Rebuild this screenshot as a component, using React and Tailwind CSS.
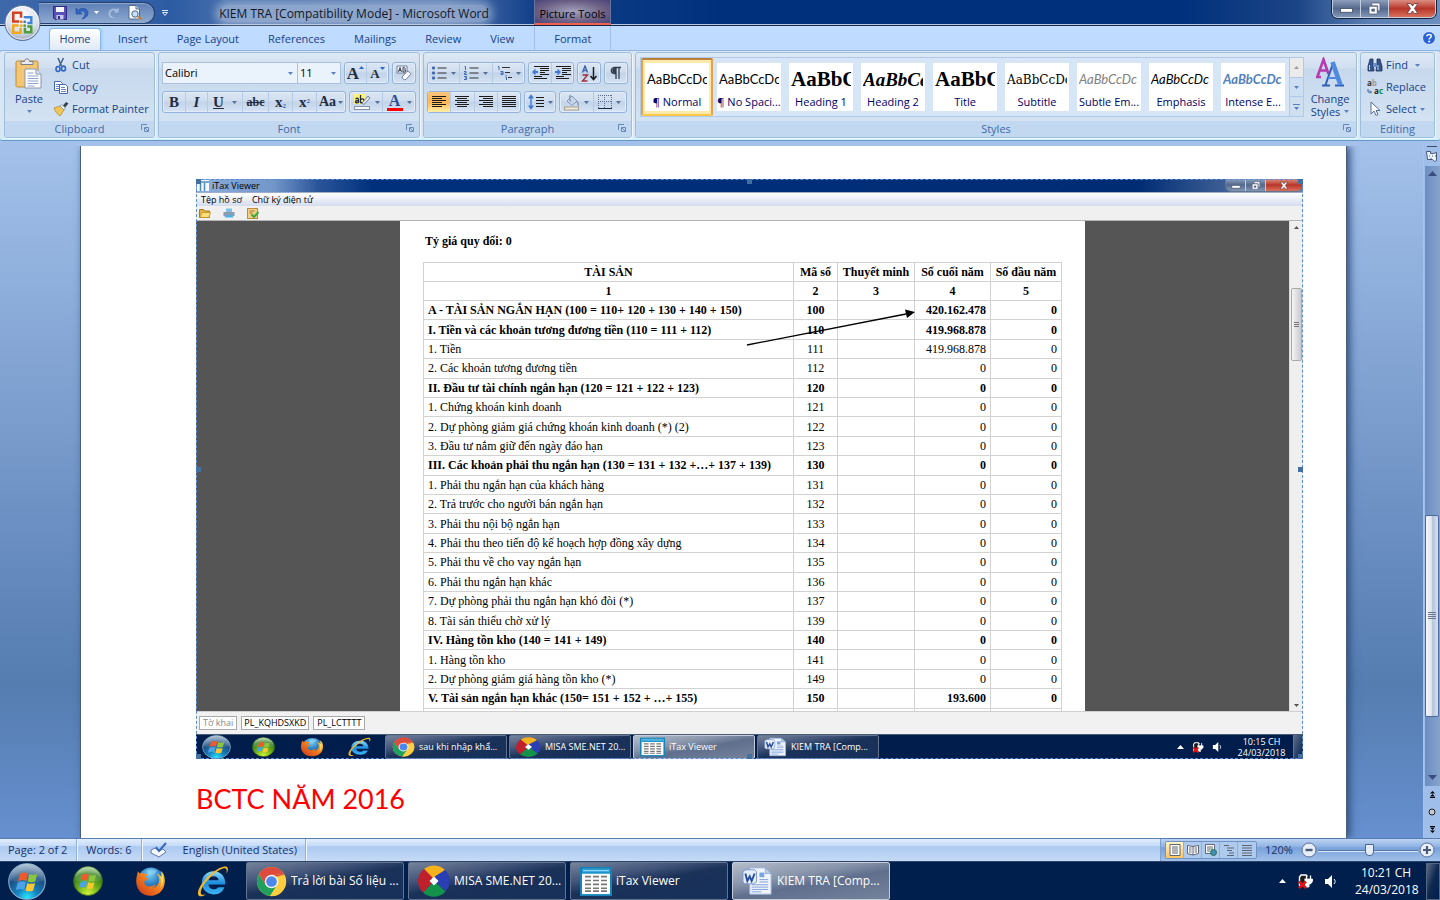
import clsx from "clsx";

const UI = "font-['Open_Sans',sans-serif]";

const TABS = ["Insert", "Page Layout", "References", "Mailings", "Review", "View"];

const STYLES = [
  { name: "¶ Normal", sample: "AaBbCcDc", cls: "font-['Lato',sans-serif] text-[13px] text-black", active: true },
  { name: "¶ No Spaci...", sample: "AaBbCcDc", cls: "font-['Lato',sans-serif] text-[13px] text-black" },
  { name: "Heading 1", sample: "AaBbCc", cls: "font-['Liberation_Serif',serif] text-[21px] font-bold text-black" },
  { name: "Heading 2", sample: "AaBbCc", cls: "font-['Liberation_Serif',serif] text-[19px] font-bold italic text-black" },
  { name: "Title", sample: "AaBbCc", cls: "font-['Liberation_Serif',serif] text-[21px] font-semibold text-black" },
  { name: "Subtitle", sample: "AaBbCcDc", cls: "font-['DejaVu_Serif',serif] text-[12px] text-black" },
  { name: "Subtle Em...", sample: "AaBbCcDc", cls: "font-['Lato',sans-serif] text-[13px] italic text-[#808080]" },
  { name: "Emphasis", sample: "AaBbCcDc", cls: "font-['Lato',sans-serif] text-[13px] italic text-black" },
  { name: "Intense E...", sample: "AaBbCcDc", cls: "font-['Lato',sans-serif] text-[13px] font-bold italic text-[#4f81bd]" },
];

const ROWS = [
  ["A - TÀI SẢN NGẮN HẠN (100 = 110+ 120 + 130 + 140 + 150)", "100", "420.162.478", true],
  ["I. Tiền và các khoản tương đương tiền (110 = 111 + 112)", "110", "419.968.878", true],
  ["1. Tiền", "111", "419.968.878"],
  ["2. Các khoản tương đương tiền", "112", "0"],
  ["II. Đầu tư tài chính ngắn hạn (120 = 121 + 122 + 123)", "120", "0", true],
  ["1. Chứng khoán kinh doanh", "121", "0"],
  ["2. Dự phòng giảm giá chứng khoán kinh doanh (*) (2)", "122", "0"],
  ["3. Đầu tư nắm giữ đến ngày đáo hạn", "123", "0"],
  ["III. Các khoản phải thu ngắn hạn (130 = 131 + 132 +…+ 137 + 139)", "130", "0", true],
  ["1. Phải thu ngắn hạn của khách hàng", "131", "0"],
  ["2. Trả trước cho người bán ngắn hạn", "132", "0"],
  ["3. Phải thu nội bộ ngắn hạn", "133", "0"],
  ["4. Phải thu theo tiến độ kế hoạch hợp đồng xây dựng", "134", "0"],
  ["5. Phải thu về cho vay ngắn hạn", "135", "0"],
  ["6. Phải thu ngắn hạn khác", "136", "0"],
  ["7. Dự phòng phải thu ngắn hạn khó đòi (*)", "137", "0"],
  ["8. Tài sản thiếu chờ xử lý", "139", "0"],
  ["IV. Hàng tồn kho (140 = 141 + 149)", "140", "0", true],
  ["1. Hàng tồn kho", "141", "0"],
  ["2. Dự phòng giảm giá hàng tồn kho (*)", "149", "0"],
  ["V. Tài sản ngắn hạn khác (150= 151 + 152 + …+ 155)", "150", "193.600", true],
];

/* ---------- shared paint ---------- */

function Gradients() {
  return (
    <svg width="0" height="0" className="absolute" aria-hidden="true">
      <defs>
        <radialGradient id="orbBlue" cx="50%" cy="95%" r="95%">
          <stop offset="0" stopColor="#29e6ff" />
          <stop offset=".3" stopColor="#1583c0" />
          <stop offset=".65" stopColor="#1c4f83" />
          <stop offset="1" stopColor="#7f9db8" />
        </radialGradient>
        <radialGradient id="orbGreen" cx="50%" cy="95%" r="95%">
          <stop offset="0" stopColor="#d4f53a" />
          <stop offset=".4" stopColor="#6fb01a" />
          <stop offset=".75" stopColor="#2f7a1b" />
          <stop offset="1" stopColor="#a3cf8a" />
        </radialGradient>
        <linearGradient id="gloss" x1="0" y1="0" x2="0" y2="1">
          <stop offset="0" stopColor="#fff" stopOpacity=".75" />
          <stop offset="1" stopColor="#fff" stopOpacity=".12" />
        </linearGradient>
        <radialGradient id="foxGlobe" cx="45%" cy="25%" r="80%">
          <stop offset="0" stopColor="#7fd3f4" />
          <stop offset=".5" stopColor="#2b7fc4" />
          <stop offset="1" stopColor="#123a7c" />
        </radialGradient>
        <linearGradient id="foxBody" x1="1" y1="0" x2="0" y2="1">
          <stop offset="0" stopColor="#ffd93b" />
          <stop offset=".45" stopColor="#f58220" />
          <stop offset="1" stopColor="#c8321b" />
        </linearGradient>
        <linearGradient id="ieBlue" x1="0" y1="0" x2="0" y2="1">
          <stop offset="0" stopColor="#8fdcfb" />
          <stop offset=".5" stopColor="#1d8fe0" />
          <stop offset="1" stopColor="#3fb4f2" />
        </linearGradient>
        <radialGradient id="officeOrb" cx="50%" cy="30%" r="75%">
          <stop offset="0" stopColor="#fff" />
          <stop offset=".6" stopColor="#d9e1ec" />
          <stop offset="1" stopColor="#8d9bb3" />
        </radialGradient>
      </defs>
    </svg>
  );
}

function WinFlag() {
  return (
    <g>
      <path d="M11 10c3-2 5-1.800 7.500-.6L17 16.500c-2.500-1.200-5-1.200-7.600.3z" fill="#f0592a" />
      <path d="M19.700 10c2.300 1 4.800 1 7.300-.2l-1.600 7c-2.400 1.300-4.800 1.200-7.100.2z" fill="#8cc63f" />
      <path d="M9 18.200c2.700-1.500 5.100-1.500 7.600-.3L15 25c-2.500-1.200-5-1.100-7.700.4z" fill="#4aa3e8" />
      <path d="M17.900 18.500c2.400 1.100 4.700 1.100 7.200-.1l-1.700 7.100c-2.500 1.200-4.800 1.100-7.100 0z" fill="#fdc82f" />
    </g>
  );
}

function StartOrb({ className, green }) {
  return (
    <svg viewBox="0 0 36 36" preserveAspectRatio="none" className={className}>
      <circle cx="18" cy="18" r="17.300" fill={green ? "url(#orbGreen)" : "url(#orbBlue)"} stroke={green ? "#3d6d1d" : "#8fb4cf"} strokeWidth="1" />
      <path d="M2 17A16 16 0 0 1 34 17Q18 22 2 17z" fill="url(#gloss)" opacity=".55" />
      <g transform="translate(-.2 .4) scale(1.03)">
        <WinFlag />
      </g>
    </svg>
  );
}

function FirefoxIcon({ className }) {
  return (
    <svg viewBox="0 0 32 32" preserveAspectRatio="none" className={className}>
      <circle cx="16.500" cy="15" r="13.500" fill="url(#foxGlobe)" />
      <path d="M12 5c3-2 8-2 11 0l-3 3-5 1z" fill="#9fe0f7" opacity=".5" />
      <path
        d="M29.500 8.500C32 15 31 23 25.500 27.500 19 32.500 9 31.500 4.500 25.500 1 21 .5 14.500 2.200 9L3 5.500l2 2.300c1.700-.8 3.400-.7 4.800.2 1.300.3 2.500.2 3.700 0-.6 1.700-2 2.300-3.300 3.200.2 1.200 2.300 1 3.300 1.400-.4 2-2.500 2-3.800 3.200-.7 2.200 1 4.300 3.300 5 3 .9 6-.8 8.700-2.300-.8 2-2 3.400-4 4.200 4-.4 7-3.700 7.300-7.700.1-2.500-.5-5-2.500-7.500 2.400.9 3.800 2.300 4.600 4 .5-1.500.6-4-.8-6.500 1.300 1 2.500 2.300 3.200 3.500z"
        fill="url(#foxBody)"
      />
      <path d="M27 6c2.600 5 3 12-1 17 2-6 1.500-10-.5-13 1 .3 1.700 1 2.300 1.800.2-2-.1-4-.8-5.800z" fill="#ffe66b" />
    </svg>
  );
}

function IEIcon({ className }) {
  return (
    <svg viewBox="0 0 32 32" preserveAspectRatio="none" className={className}>
      <path
        d="M16.500 6C10 6 5.500 11 5.500 17.300S10.300 28.500 16.800 28.500c4.700 0 8.600-2.600 10-7h-6c-.8 1.400-2.200 2-3.900 2-3 0-5-1.900-5.100-4.700H27.500C28 11.500 23.500 6 16.500 6zm-4.600 8.700c.4-2.400 2.200-3.900 4.700-3.900s4.400 1.500 4.700 3.900z"
        fill="url(#ieBlue)"
      />
      <path
        d="M28.800 8.500c1.600-3.600 1.700-6 .1-6.800-2.300-1.200-8 1.200-13 5.300C7 14 .8 23.700 2 28.500c.7 2.600 4 2.200 8-.2-2.700.9-4.700 1-5.300-.5C3.400 24.400 8.500 16 15.700 9.700 21 5 26.300 2.300 28 3.500c1 .7 1 2.500.8 5z"
        fill="#f3b92d"
      />
    </svg>
  );
}

function ChromeIcon({ className }) {
  return (
    <svg viewBox="0 0 32 32" preserveAspectRatio="none" className={className}>
      <circle cx="16" cy="16" r="15" fill="#ffcd40" />
      <path d="M3 8.500A15 15 0 0 1 29.300 9H16l-6.500 10.500z" fill="#dd4b3e" />
      <path d="M3 8.500A15 15 0 0 0 14.500 30.900L21.700 19.500 16 22.500 9.800 19.500z" fill="#1fa05c" />
      <path d="M29.300 9A15 15 0 0 1 14.500 31L22.300 19.500 21 10z" fill="#ffcd40" />
      <path d="M29.300 9H16v3z" fill="#dd4b3e" />
      <circle cx="16" cy="16" r="7" fill="#f4f4f4" />
      <circle cx="16" cy="16" r="5.500" fill="#4a88ee" />
    </svg>
  );
}

// Four pinwheel quarters round a white diamond.
function MisaIcon({ className }) {
  return (
    <svg viewBox="0 0 32 32" preserveAspectRatio="none" className={className}>
      <path d="M6 4A15.500 15.500 0 0 1 27 5L20 12 15 15z" fill="#f4b21d" />
      <path d="M27 5A15.500 15.500 0 0 1 27.500 26.500L20 19 16 16 16 12z" fill="#2a3fb4" />
      <path d="M27.500 26.500A15.500 15.500 0 0 1 5 27.500L12 20 16 16z" fill="#12924a" />
      <path d="M5 27.500A15.500 15.500 0 0 1 6 4L17 15z" fill="#c01f2c" />
      <path d="M16 11.500 20.500 16 16 20.500 11.500 16z" fill="#fff" />
    </svg>
  );
}

function SheetIcon({ className }) {
  return (
    <svg viewBox="0 0 32 32" preserveAspectRatio="none" className={className}>
      <rect x="1" y="2" width="30" height="28" fill="#fff" stroke="#1583b8" strokeWidth="2" />
      <rect x="2" y="3" width="28" height="5" fill="#1e94cf" />
      <rect x="3" y="4" width="26" height="1.500" fill="#8fd4f2" />
      {[11, 15, 19, 23, 26].map((y) => (
        <path key={y} d={`M5 ${y}h6M13 ${y}h6M21 ${y}h6`} stroke="#777" strokeWidth="1.700" />
      ))}
    </svg>
  );
}

function WordIcon({ className }) {
  return (
    <svg viewBox="0 0 32 32" preserveAspectRatio="none" className={className}>
      <path d="M8 2h16l6 6v22H8z" fill="#f0f5fc" stroke="#9cb6dd" />
      <path d="M24 2v6h6z" fill="#bcd0ee" stroke="#86a4d2" strokeWidth=".8" />
      <rect x="18" y="7" width="5" height="5" fill="#7ba3dd" />
      <path d="M10 20h17M10 22.500h17M10 25h17M10 27.500h10M18 14.500h9M18 17h9" stroke="#7d9fd6" strokeWidth="1" />
      <path d="M1 6l3-2h9l2 2v11l-3 2H3l-2-2z" fill="#e6eefb" stroke="#7896cf" />
      <path d="M3.500 8l2 8 2.500-5 2 5 3-8" fill="none" stroke="#2b4fa0" strokeWidth="2" />
    </svg>
  );
}

function Caret({ className }) {
  return (
    <svg width="5" height="3" viewBox="0 0 5 3" className={clsx("shrink-0", className)}>
      <path d="M0 0h5L2.500 3z" fill="currentColor" />
    </svg>
  );
}

/* ---------- title bar ---------- */

function OfficeButton() {
  return (
    <button type="button" aria-label="Office" className="absolute left-1 top-1 z-10">
      <svg width="37" height="38" viewBox="0 0 38 38">
        <circle cx="19" cy="19" r="18" fill="url(#officeOrb)" stroke="#5b7196" />
        <circle cx="19" cy="19" r="16.800" fill="none" stroke="#fff" strokeOpacity=".7" />
        <g fill="none" strokeWidth="2.600">
          <path d="M15.500 17.500H9.500V8.500h8v5" stroke="#d7401f" />
          <path d="M21.500 14v-1h6.500v6H24" stroke="#3f86d8" />
          <path d="M15 21.500H9.500V29h7.500v-5" stroke="#f2a81d" />
          <path d="M21.500 24v4.500h6.500v-6h-4" stroke="#4f9d3a" />
        </g>
        <path d="M16.500 16.500h2.500v2.500h-2.500z" fill="#e8771f" />
        <path d="M20 16.500h2.500v2.500H20z" fill="#3a78c8" />
        <path d="M16.500 20.500h2.500V23h-2.500z" fill="#f2a81d" />
        <path d="M20 20.500h2.500V23H20z" fill="#4f9d3a" />
      </svg>
    </button>
  );
}

function QuickAccess() {
  return (
    <div className="flex w-[170px] items-center pl-[39px]">
      <div className="flex h-[22px] w-[116px] items-center gap-2 rounded-r-full border border-l-0 border-[#24406f] bg-linear-to-b from-[#5f80b5] to-[#8eaad2] pl-[14px] shadow-[inset_0_1px_0_#8ba5cc]">
        <button type="button" aria-label="Save">
          <svg width="14" height="14" viewBox="0 0 14 14">
            <path d="M.5.5h13v13H2l-1.500-1.500z" fill="#5a50b8" stroke="#2d2a80" />
            <path d="M3 1h8v5H3z" fill="#f4f6fc" />
            <path d="M3.500 9h7v4.500h-7z" fill="#c6c8e8" />
            <path d="M5 10h2v3H5z" fill="#2d2a80" />
          </svg>
        </button>
        <button type="button" aria-label="Undo" className="flex items-center gap-[5px] text-white">
          <svg width="14" height="14" viewBox="0 0 14 14">
            <path d="M1 2v6h6L4.800 5.800C7 4 10.500 5 10 8.500c-.3 2-1.500 3.300-3 4.500 3.500-.7 6-3 6-6C13 2.500 7.500.8 3.200 4.200z" fill="#3266c4" stroke="#1f4695" strokeWidth=".6" />
          </svg>
          <Caret />
        </button>
        <button type="button" aria-label="Redo">
          <svg width="13" height="14" viewBox="0 0 13 14">
            <path d="M12 1v6H6l2-2C5 4 3.500 6 4 8.500c.5 2.500 4 3.500 7 2C8 14.500 1.500 13 1 8.500.7 4 5.500.8 10 3z" fill="#a5bcdf" stroke="#6f8dbd" strokeWidth=".6" />
          </svg>
        </button>
        <button type="button" aria-label="Print preview">
          <svg width="15" height="15" viewBox="0 0 15 15">
            <path d="M1 .5h7L11.500 4v10H1z" fill="#fff" stroke="#59698a" />
            <path d="M8 .5V4h3.500" fill="#cfd9ea" stroke="#59698a" />
            <circle cx="7" cy="9" r="3.200" fill="#c5e3f8" stroke="#47648f" />
            <path d="M9.500 11.500 14 14.500" stroke="#c4822c" strokeWidth="2" />
          </svg>
        </button>
      </div>
      <button type="button" aria-label="Customize Quick Access Toolbar" className="ml-[7px] text-white">
        <svg width="6" height="6" viewBox="0 0 6 6">
          <path d="M0 .5h6" stroke="#dfe9f8" />
          <path d="M.5 2.500h5L3 5.500z" fill="none" stroke="#dfe9f8" />
        </svg>
      </button>
    </div>
  );
}

function WindowButtons({ small }) {
  const cell = small ? "h-3 w-5" : "h-[17px] w-7";
  const glyph = small ? "h-[9px] w-[10px]" : "h-[13px] w-[13px]";
  return (
    <div
      className={clsx(
        "flex self-start overflow-hidden rounded-b-md border border-t-0",
        small ? "border-[#5f7592]" : "border-[#c3d0e2] shadow-[0_0_0_1px_#16233e]"
      )}
    >
      <button type="button" aria-label="Minimize" className={clsx(cell, "flex items-center justify-center border-r border-[#c3cfdf] bg-linear-to-b from-[#8d9fbb] via-[#54698e] to-[#8296b6]")}>
        <svg viewBox="0 0 12 12" className={glyph}>
          <rect x=".5" y="6" width="11" height="3.500" fill="#fff" stroke="#49536a" strokeWidth=".8" />
        </svg>
      </button>
      <button type="button" aria-label="Restore" className={clsx(cell, "flex items-center justify-center border-r border-[#c3cfdf] bg-linear-to-b from-[#8d9fbb] via-[#54698e] to-[#8296b6]")}>
        <svg viewBox="0 0 12 12" className={glyph}>
          <path d="M3.500 1h7.500v7H9V3.500H3.500z" fill="#fff" stroke="#49536a" strokeWidth=".6" />
          <path d="M1 4h7.500v7H1zM3.500 6.500v2H6v-2z" fill="#fff" fillRule="evenodd" stroke="#49536a" strokeWidth=".6" />
        </svg>
      </button>
      <button type="button" aria-label="Close" className={clsx(small ? "h-3 w-9" : "h-[17px] w-[46px]", "flex items-center justify-center bg-linear-to-b from-[#d98d80] via-[#b8352a] to-[#d9705a]")}>
        <svg viewBox="0 0 12 12" className={glyph}>
          <path d="M1 1.500h3.300L6 3.700l1.700-2.200H11L7.800 6 11 10.500H7.700L6 8.300 4.300 10.500H1L4.200 6z" fill="#fff" stroke="#5b3038" strokeWidth=".7" />
        </svg>
      </button>
    </div>
  );
}

function TitleBar() {
  return (
    <header className="flex h-[26px] border-b border-[#152848] bg-[linear-gradient(90deg,#3d69ab_0%,#2e5ca3_12%,#4d74ae_17%,#5478b0_31%,#12408a_37%,#00307c_50%,#00307c_82%,#1b4485_90%,#5a7fb2_95%,#6c8fc0_100%)] shadow-[inset_0_-1px_0_#b5c8e3]">
      <QuickAccess />
      <h1 className="w-[364px] self-center pl-1 pt-[2px] text-center text-[12px] leading-4 text-[#101828]">
        <span className="rounded-full bg-[#c9d6ea]/50 shadow-[0_0_8px_4px_rgb(201_214_234/0.5)]">
          KIEM TRA [Compatibility Mode] - Microsoft Word
        </span>
      </h1>
      <div className="flex w-[77px] items-center justify-center border-x border-b-2 border-x-[#6b7499] border-b-[#f0604c] bg-[radial-gradient(ellipse_at_center,#a2a3bd_0%,#6f6287_60%,#4a4379_100%)] pt-[6px] text-[11px] text-black">
        Picture Tools
      </div>
      <div className="flex flex-1 justify-end pr-1">
        <WindowButtons />
      </div>
    </header>
  );
}

function TabRow() {
  return (
    <nav className="flex h-6 items-end gap-px bg-[#bfdbff] pl-[49px] text-[11px] text-[#15428b]">
      <button type="button" className="mr-[2px] h-[22px] w-[52px] rounded-t border border-b-0 border-[#8db2e3] bg-linear-to-b from-white to-[#dfe9f5] shadow-[1px_0_3px_#7fd8ee]">
        Home
      </button>
      {TABS.map((t) => (
        <button key={t} type="button" className="h-[22px] px-[14px]">
          {t}
        </button>
      ))}
      <button type="button" className="ml-[5px] h-6 w-[77px] self-stretch border-x border-[#a3bfe6] pt-[2px]">
        Format
      </button>
      <button type="button" aria-label="Help" className="ml-auto mr-1 self-center">
        <svg width="14" height="14" viewBox="0 0 14 14">
          <circle cx="7" cy="7" r="6.500" fill="#2a63d6" stroke="#dce8f8" />
          <path d="M4.800 5.300C5 2.800 9.300 2.800 9.300 5.200 9.300 6.800 7.200 6.700 7.200 8.500" fill="none" stroke="#fff" strokeWidth="1.500" />
          <circle cx="7.200" cy="10.500" r="1" fill="#fff" />
        </svg>
      </button>
    </nav>
  );
}

/* ---------- ribbon ---------- */

function Group({ title, launcher, className, children }) {
  return (
    <section
      className={clsx(
        "flex h-[86px] flex-col overflow-hidden rounded-[3px] border border-[#9ebfdb] bg-[linear-gradient(180deg,#dee8f5_0%,#d1dff0_18%,#c7d8ed_19%,#d6e6f4_100%)] shadow-[1px_1px_0_#eef5fc]",
        className
      )}
    >
      <div className="min-h-0 flex-1">{children}</div>
      <div className="relative h-4 bg-[#c2d8f0] text-center text-[11px] leading-4 text-[#3e6aaa]">
        {title}
        {launcher && (
          <button type="button" aria-label={`${title} options`} className="absolute right-[5px] top-[3px]">
            <svg width="8" height="8" viewBox="0 0 8 8" fill="none" stroke="#6888b5">
              <path d="M.5 6V.5H6M3.500 3.500h4v4h-4z" />
              <path d="M4 4l3 3" />
            </svg>
          </button>
        )}
      </div>
    </section>
  );
}

function Cluster({ className, children }) {
  return (
    <div className={clsx("flex h-[22px] rounded-[3px] border border-[#94b4dc] bg-[linear-gradient(180deg,#dbe6f3_0%,#cfddee_45%,#c2d3e9_50%,#d5e3f3_100%)] text-[#54709c] shadow-[inset_0_0_0_1px_#e4edf7]", className)}>
      {children}
    </div>
  );
}

// `width` pins a tool; without it the tools of a cluster share the room evenly.
function Tool({ label, caret, width = "flex-1", className, children }) {
  return (
    <button type="button" aria-label={label} className={clsx("flex h-5 items-center justify-center gap-1 border-r border-[#b6cbe4] last:border-r-0", width, className)}>
      {children}
      {caret && <Caret />}
    </button>
  );
}

function ClipboardGroup() {
  return (
    <Group title="Clipboard" launcher className="w-[151px]">
      <div className="flex h-full pl-1 text-[11px] text-[#15428b]">
        <button type="button" className="flex w-10 flex-col items-center pt-[5px]">
          <svg width="30" height="32" viewBox="0 0 30 32">
            <rect x="2" y="3" width="22" height="26" rx="1.500" fill="#f2c673" stroke="#c08a35" />
            <path d="M7 3.500h3.500c0-3.500 5-3.500 5 0H19v3H7z" fill="#e7e9ee" stroke="#7b7f8a" />
            <path d="M11 11h11l5 5v14H11z" fill="#fff" stroke="#8796b4" />
            <path d="M22 11v5h5" fill="#dfe6f2" stroke="#8796b4" />
            <path d="M13.500 15h6M13.500 18h11M13.500 20.500h11M13.500 23h11M13.500 25.500h11M13.500 28h7" stroke="#8fa3cc" />
          </svg>
          <span className="pt-px leading-4">Paste</span>
          <Caret className="mt-[3px] text-[#5a80bd]" />
        </button>
        <div className="flex flex-col gap-[6px] pl-1 pt-1">
          <button type="button" className="flex h-4 items-center gap-[3px]">
            <svg width="16" height="16" viewBox="0 0 16 16">
              <path d="M5 1l3.500 8M10.500 1 6.500 9" stroke="#47618f" strokeWidth="1.600" />
              <ellipse cx="5" cy="12" rx="2" ry="2.500" fill="none" stroke="#2f66c4" strokeWidth="1.600" />
              <ellipse cx="10.500" cy="11.500" rx="2" ry="2.400" fill="none" stroke="#2f66c4" strokeWidth="1.600" />
            </svg>
            Cut
          </button>
          <button type="button" className="flex h-4 items-center gap-[3px]">
            <svg width="16" height="16" viewBox="0 0 16 16">
              <path d="M1.500 2.500h6l2 2v7h-8z" fill="#fff" stroke="#4568ad" />
              <path d="M3 5.500h4M3 7.500h5M3 9.500h3" stroke="#6288cc" />
              <path d="M6.500 5.500h6l2 2v7h-8z" fill="#fff" stroke="#4568ad" />
              <path d="M8 8.500h4M8 10.500h5M8 12.500h5" stroke="#6288cc" />
            </svg>
            Copy
          </button>
          <button type="button" className="flex h-4 items-center gap-[3px] whitespace-nowrap">
            <svg width="16" height="16" viewBox="0 0 16 16">
              <path d="M1 7l6-2 4 4-4 6C4 13 2 10 1 7z" fill="#f0c65a" stroke="#b98a2a" strokeWidth=".8" />
              <path d="M7 5l2-1.500 3.500 3.500L11 9z" fill="#e9edf5" stroke="#7d8aa8" strokeWidth=".7" />
              <path d="M10 4.500 13 1l2.500 1.500L12 6.500z" fill="#3a424f" />
            </svg>
            Format Painter
          </button>
        </div>
      </div>
    </Group>
  );
}

function Combo({ label, value, className }) {
  return (
    <div className={clsx("relative h-[22px] border border-[#abc1de] bg-[#eaf2fb]", className)}>
      <select aria-label={label} defaultValue={value} className="block h-5 w-full appearance-none bg-transparent pl-[2px] text-[11px] leading-5 text-black outline-none">
        <option>{value}</option>
      </select>
      <Caret className="pointer-events-none absolute right-1 top-[9px] text-[#5a80bd]" />
    </div>
  );
}

function FontGroup() {
  const serif = "font-['Liberation_Serif',serif] leading-none text-[#222c3e]";
  return (
    <Group title="Font" launcher className="w-[262px]">
      <div className="flex flex-col gap-[7px] px-[3px] pt-[9px]">
        <div className="flex">
          <Combo label="Font" value="Calibri" className="w-[136px]" />
          <Combo label="Font size" value="11" className="w-[43px] border-l-0" />
          <Cluster className="ml-[3px] w-[45px]">
            <Tool label="Grow Font" className={clsx(serif, "text-[17px] font-bold")}>
              <span className="flex items-start">A<svg width="5" height="5" viewBox="0 0 5 5"><path d="M0 4h5L2.500 1z" fill="#2f66c4" /></svg></span>
            </Tool>
            <Tool label="Shrink Font" className={clsx(serif, "text-[13px] font-bold")}>
              <span className="flex items-start">A<svg width="5" height="5" viewBox="0 0 5 5"><path d="M0 0h5L2.500 3z" fill="#2f66c4" /></svg></span>
            </Tool>
          </Cluster>
          <Cluster className="ml-[3px] w-6">
            <Tool label="Clear Formatting">
              <svg width="18" height="18" viewBox="0 0 18 18">
                <path d="M2 2h10v7H2z" fill="#f5f8fd" stroke="#55678d" strokeWidth=".8" />
                <path d="M3.500 8 5 3.500 6.500 8M4 6.500h2M8 3.500v4.500h1.500c1.500 0 1.500-2 0-2 1.300 0 1.300-2.500-1.500-2.500" fill="none" stroke="#222c3e" strokeWidth=".9" />
                <path d="M7 13l5-5.500c1-.8 4 1.500 3.500 3L11 15.500c-1.500 1-4-1-4-2.500z" fill="#fff" stroke="#6a7ba0" />
              </svg>
            </Tool>
          </Cluster>
        </div>
        <div className="flex gap-[3px]">
          <Cluster className="w-[184px]">
            <Tool label="Bold" width="w-[23px]" className={clsx(serif, "text-[15px] font-bold")}>B</Tool>
            <Tool label="Italic" width="w-[22px]" className={clsx(serif, "text-[15px] font-bold italic")}>I</Tool>
            <Tool label="Underline" caret width="w-[35px]">
              <span className={clsx(serif, "mr-1 text-[15px] font-bold underline")}>U</span>
            </Tool>
            <Tool label="Strikethrough" width="w-[26px]" className={clsx(serif, "text-[12px] font-bold line-through")}>abc</Tool>
            <Tool label="Subscript" width="w-6" className={clsx(serif, "text-[15px] font-bold")}>
              <span>x<sub className="text-[7px] text-[#2f66c4]">2</sub></span>
            </Tool>
            <Tool label="Superscript" width="w-6" className={clsx(serif, "text-[15px] font-bold")}>
              <span>x<sup className="text-[7px] text-[#2f66c4]">2</sup></span>
            </Tool>
            <button type="button" aria-label="Change Case" className="flex w-7 shrink-0 items-center justify-center gap-[2px]">
              <span className={clsx(serif, "text-[14px] font-bold")}>Aa</span>
              <Caret />
            </button>
          </Cluster>
          <Cluster className="w-[67px]">
            <Tool label="Highlight" caret>
              <svg width="18" height="18" viewBox="0 0 18 18">
                <rect x="1" y="1" width="11" height="10" fill="#fff27a" />
                <path d="M2.500 6c2-1.500 3-.5 3 1v2.500c-1 .5-3.500.5-3-1 .2-1 2-1 3-1M7.500 2v7.500c3 .8 4-.5 3.500-2.500-.5-1.500-2.500-1.500-3.500 0" fill="none" stroke="#222c3e" strokeWidth="1.300" />
                <path d="M9 10 15 3l2 2-6 6.500z" fill="#dfe6f2" stroke="#55678d" strokeWidth=".8" />
                <rect x="1.500" y="13.500" width="15" height="3" fill="#f5f8fd" stroke="#8793a8" />
              </svg>
            </Tool>
            <Tool label="Font Color" caret>
              <span className="flex h-[17px] w-4 items-start justify-center border-b-[3px] border-[#ff0000] font-['Liberation_Serif',serif] text-[16px] font-bold leading-[14px] text-[#2c4c94]">
                A
              </span>
            </Tool>
          </Cluster>
        </div>
      </div>
    </Group>
  );
}

function Lines({ rows }) {
  return (
    <svg width="16" height="14" viewBox="0 0 16 14" stroke="#1b1b1b">
      {rows.map(([x1, x2], i) => (
        <path key={i} d={`M${x1} ${i * 2 + 1.5}H${x2}`} />
      ))}
    </svg>
  );
}

const LEFT = [[1, 15], [1, 11], [1, 15], [1, 11], [1, 15], [1, 11]];
const CENTER = [[1, 15], [3, 13], [1, 15], [3, 13], [1, 15], [3, 13]];
const RIGHT = [[1, 15], [5, 15], [1, 15], [5, 15], [1, 15], [5, 15]];
const FULL = [[1, 15], [1, 15], [1, 15], [1, 15], [1, 15], [1, 15]];

function ListIcon({ kind }) {
  return (
    <svg width="15" height="16" viewBox="0 0 15 16">
      {kind === "multi" ? (
        <path d="M5 2.500h8M8 7.500h5M11 12.500h4" stroke="#333" />
      ) : (
        <path d="M5.500 3h9M5.500 8h9M5.500 13h9" stroke="#333" />
      )}
      {kind === "bullet" && (
        <g fill="#3e68b4">
          <rect x="0" y="1.500" width="3" height="3" rx="1" />
          <rect x="0" y="6.500" width="3" height="3" rx="1" />
          <rect x="0" y="11.500" width="3" height="3" rx="1" />
        </g>
      )}
      {kind === "number" && (
        <path d="M.5 1.500h1V5M0 6.500h2v1.500H.5v1.500H3M0 11.500h2.500v3H0M.8 13h1.700" fill="none" stroke="#3e68b4" />
      )}
      {kind === "multi" && (
        <path d="M1 1.500h1V5M3.500 6.500H6v3H4V8h2M8.500 12h1v3M9 10v1" fill="none" stroke="#3e68b4" />
      )}
    </svg>
  );
}

function IndentIcon({ right }) {
  return (
    <svg width="17" height="16" viewBox="0 0 17 16">
      <path d="M2 1.500h15M8 3.500h9M8 5.500h9M8 7.500h5M8 9.500h9M2 11.500h8M2 13.500h13" stroke="#1b1b1b" />
      <path d={right ? "M7 7 3.500 3.500V6H1v2h2.500v2.500z" : "M0 7 3.500 3.500V6H6v2H3.500v2.500z"} fill="#3e78d8" />
    </svg>
  );
}

function ParagraphGroup() {
  return (
    <Group title="Paragraph" launcher className="w-[209px]">
      <div className="flex flex-col gap-[7px] px-[3px] pt-[9px]">
        <div className="flex gap-[3px]">
          <Cluster className="w-[99px]">
            <Tool label="Bullets" caret><ListIcon kind="bullet" /></Tool>
            <Tool label="Numbering" caret><ListIcon kind="number" /></Tool>
            <Tool label="Multilevel List" caret><ListIcon kind="multi" /></Tool>
          </Cluster>
          <Cluster className="w-[46px]">
            <Tool label="Decrease Indent"><IndentIcon /></Tool>
            <Tool label="Increase Indent"><IndentIcon right /></Tool>
          </Cluster>
          <Cluster className="w-6">
            <Tool label="Sort">
              <svg width="17" height="17" viewBox="0 0 17 17">
                <path d="M1.500 7.500 4 1l2.500 6.500M2.200 5.500h3.600" fill="none" stroke="#3a64b0" strokeWidth="1.400" />
                <path d="M1.500 10h5l-5 6h5" fill="none" stroke="#a02c3c" strokeWidth="1.400" />
                <path d="M12.500 2v12M9.500 11l3 3.500 3-3.500" fill="none" stroke="#1b1b1b" strokeWidth="1.500" />
              </svg>
            </Tool>
          </Cluster>
          <Cluster className="w-6">
            <Tool label="Show paragraph marks">
              <svg width="12" height="14" viewBox="0 0 12 14">
                <path d="M11 1.500H5C0 1.500 0 7.500 5 7.500V2M6 1.500V13M9 1.500V13" fill="none" stroke="#333c4d" strokeWidth="1.300" />
                <path d="M5.500 2C1 2 1 7 5.500 7z" fill="#333c4d" />
              </svg>
            </Tool>
          </Cluster>
        </div>
        <div className="flex gap-[3px]">
          <Cluster className="w-[94px]">
            <Tool label="Align Left" className="bg-linear-to-b from-[#fbc57c] via-[#fdb456] to-[#fff0a4]"><Lines rows={LEFT} /></Tool>
            <Tool label="Center"><Lines rows={CENTER} /></Tool>
            <Tool label="Align Right"><Lines rows={RIGHT} /></Tool>
            <Tool label="Justify"><Lines rows={FULL} /></Tool>
          </Cluster>
          <Cluster className="w-8">
            <Tool label="Line Spacing" caret>
              <svg width="16" height="16" viewBox="0 0 16 16">
                <path d="M3 2v12M.8 4.500 3 1.500l2.200 3M.8 11.500 3 14.500l2.200-3" fill="none" stroke="#3e78d8" strokeWidth="1.400" />
                <path d="M8 3.500h8M8 6.500h8M8 9.500h8M8 12.500h8" stroke="#1b1b1b" />
              </svg>
            </Tool>
          </Cluster>
          <Cluster className="w-[68px]">
            <Tool label="Shading" caret>
              <svg width="17" height="17" viewBox="0 0 17 17">
                <path d="M4 7l5-5 5 5-5 4.500z" fill="#c9d6e8" stroke="#8397b8" />
                <path d="M8 1.500c-2 0-2 4 0 6M13.500 7c1.500 1 2 3 1.500 5" fill="none" stroke="#8397b8" strokeWidth="1.300" />
                <rect x="1.500" y="13" width="14" height="3" fill="#f1ece0" stroke="#a39c8c" />
              </svg>
            </Tool>
            <Tool label="Borders" caret>
              <svg width="14" height="14" viewBox="0 0 14 14" fill="none" stroke="#5a6a88">
                <path d="M0 .5h14M0 6.500h14M.5 0v14M6.500 0v14M13.500 0v14" strokeDasharray="1 1" />
                <path d="M0 13.500h14" stroke="#1b2a48" />
              </svg>
            </Tool>
          </Cluster>
        </div>
      </div>
    </Group>
  );
}

function StylesGroup() {
  return (
    <Group title="Styles" launcher className="min-w-0 flex-1">
      <div className="flex h-full pl-1 pt-1">
        <div className="flex h-[60px] min-w-0 flex-1 border border-[#b0c9e8] bg-[#d6e6f7]">
          {STYLES.map((s) => (
            <button
              key={s.name}
              type="button"
              className={clsx(
                "flex h-[58px] w-[72px] shrink-0 rounded-[2px]",
                s.active
                  ? "border-2 border-b-[#fbc94a] border-l-[#e8a04c] border-r-[#e8a04c] border-t-[#b9803c] bg-[#fde9a8] px-[2px] py-[3px]"
                  : "px-1 py-[5px]"
              )}
            >
              <span className="flex h-full w-full flex-col items-center overflow-hidden bg-white px-[2px] pt-[3px]">
                <span className={clsx("flex h-7 w-[60px] items-center overflow-hidden whitespace-nowrap", s.cls)}>
                  {s.sample}
                </span>
                <span className="whitespace-nowrap text-[11px] leading-4 text-[#00006b]">{s.name}</span>
              </span>
            </button>
          ))}
          <div className="ml-auto flex w-[14px] flex-col border-l border-[#b0c9e8] text-[#5a80bd]">
            <button type="button" aria-label="Scroll up" className="flex flex-1 items-center justify-center bg-[#ebebeb] text-[#9b9b9b]">
              <Caret className="rotate-180" />
            </button>
            <button type="button" aria-label="Scroll down" className="flex flex-1 items-center justify-center border-y border-[#b0c9e8] bg-[#cfdff2]">
              <Caret />
            </button>
            <button type="button" aria-label="More styles" className="flex flex-1 flex-col items-center justify-center gap-[2px] bg-[#cfdff2]">
              <span className="h-px w-[7px] bg-[#5a80bd]" />
              <Caret />
            </button>
          </div>
        </div>
        <button type="button" className="flex w-[52px] flex-col items-center text-[11px] leading-[13px] text-[#15428b]">
          <svg width="30" height="31" viewBox="0 0 30 31" className="mb-1">
            <path d="M1 20h5M2.500 19.500 8.500 2.500 13.500 17M5 13.500h7" fill="none" stroke="#b43cb0" strokeWidth="2.600" />
            <path d="M7 28.500h8M20 28.500h9" stroke="#2d60b8" strokeWidth="2" />
            <path d="M10.500 28 18 6.500" stroke="#2d60b8" strokeWidth="2" />
            <path d="M17.500 5 25.500 28" stroke="#4f8ae0" strokeWidth="4.600" />
            <path d="M13 21h9" stroke="#4f8ae0" strokeWidth="2.200" />
          </svg>
          <span>Change</span>
          <span className="flex items-center gap-1">Styles <Caret className="text-[#5a80bd]" /></span>
        </button>
      </div>
    </Group>
  );
}

function EditingGroup() {
  return (
    <Group title="Editing" className="w-[75px]">
      <div className="flex flex-col gap-[6px] pl-[6px] pt-1 text-[11px] text-[#15428b]">
        <button type="button" className="flex h-4 items-center gap-[3px]">
          <svg width="16" height="16" viewBox="0 0 16 16">
            <path d="M2 6l1-4h3v4l1 8H1V9zM14 6l-1-4h-3v4l-1 8h6V9z" fill="#35558f" stroke="#1c325f" strokeWidth=".8" />
            <path d="M6 6h4v4H6z" fill="#6b8dc7" />
            <path d="M2.500 8v5M11 8v5" stroke="#c3d6f2" />
          </svg>
          Find <Caret className="ml-1 text-[#5a80bd]" />
        </button>
        <button type="button" className="flex h-4 items-center gap-[3px]">
          <span className="flex w-4 flex-col text-[8px] font-bold leading-[8px]">
            <span className="text-left text-[#333]">a<span className="text-[#999]">b</span></span>
            <span className="flex items-center justify-between text-[#222]">
              <svg width="5" height="5" viewBox="0 0 5 5">
                <path d="M1 0v3h3M3 1.500 4.500 3 3 4.500" fill="none" stroke="#3a5c98" />
              </svg>
              <span>a<span className="text-[#1f8a2f]">c</span></span>
            </span>
          </span>
          Replace
        </button>
        <button type="button" className="flex h-4 items-center gap-[3px]">
          <svg width="16" height="16" viewBox="0 0 16 16">
            <path d="M4 1v12l3-3 2 4.500 2-1L9 9.500h4z" fill="#fff" stroke="#5e6f94" />
          </svg>
          Select <Caret className="ml-px text-[#5a80bd]" />
        </button>
      </div>
    </Group>
  );
}

function Ribbon() {
  return (
    <div className="bg-[#a3c1ea] pb-[5px]">
      <div className="flex gap-[3px] rounded-[3px] border-b border-t border-b-[#6f93c4] border-t-[#8db2e3] bg-[#dbe6f4] py-px pb-[2px] pl-1 pr-[5px] shadow-[inset_0_-2px_1px_#c9f4fb]">
        <ClipboardGroup />
        <FontGroup />
        <ParagraphGroup />
        <StylesGroup />
        <EditingGroup />
      </div>
    </div>
  );
}

/* ---------- pasted iTax Viewer picture ---------- */

function BalanceTable() {
  const cell = "border border-[#d2d2d2] px-1 py-0";
  return (
    <table className="h-[466px] w-full table-fixed border-collapse text-[12px] leading-[14px]">
      <colgroup>
        <col />
        <col className="w-[44px]" />
        <col className="w-[77px]" />
        <col className="w-[76px]" />
        <col className="w-[71px]" />
      </colgroup>
      <thead>
        <tr className="h-[19px] whitespace-nowrap">
          <th className={cell}>TÀI SẢN</th>
          <th className={cell}>Mã số</th>
          <th className={cell}>Thuyết minh</th>
          <th className={cell}>Số cuối năm</th>
          <th className="border border-[#d2d2d2] p-0">Số đầu năm</th>
        </tr>
        <tr className="h-[19px]">
          {[1, 2, 3, 4, 5].map((n) => (
            <th key={n} className={cell}>{n}</th>
          ))}
        </tr>
      </thead>
      <tbody>
        {ROWS.map(([name, code, end, bold]) => (
          <tr key={code} className={clsx("whitespace-nowrap", bold && "font-bold")}>
            <td className={cell}>{name}</td>
            <td className={clsx(cell, "text-center")}>{code}</td>
            <td className={cell} />
            <td className={clsx(cell, "text-right")}>{end}</td>
            <td className={clsx(cell, "text-right")}>0</td>
          </tr>
        ))}
        <tr>
          <td className={cell}>&nbsp;</td>
          <td className={cell} />
          <td className={cell} />
          <td className={cell} />
          <td className={cell} />
        </tr>
      </tbody>
    </table>
  );
}

function Handle({ className }) {
  return <span className={clsx("absolute h-[5px] w-[5px] bg-[#44709f]", className)} />;
}

function ITaxPicture() {
  return (
    <div className="relative flex h-[580px] flex-col overflow-hidden bg-[#f0f0f0] text-[#222]">
      <div className="flex h-[14px] shrink-0 items-center border-b border-[#9eaecb] bg-[linear-gradient(90deg,#8caedb_0%,#7396c9_7%,#2b559a_11%,#00307c_16%,#002c74_85%,#3e5f95_93%,#6b86b2_100%)] pl-px">
        <svg width="12" height="11" viewBox="0 0 12 11">
          <rect width="12" height="11" fill="#f4f8fc" />
          <path d="M0 2h12M3.500 3v8M7.500 3v8" stroke="#4c8cc0" strokeWidth="1.500" />
        </svg>
        <span className="ml-[3px] text-[9px] leading-3 text-black">iTax Viewer</span>
        <div className="ml-auto flex self-start">
          <WindowButtons small />
        </div>
      </div>
      <div className="flex h-[13px] shrink-0 items-center gap-[10px] bg-linear-to-b from-white to-[#d5dcee] pl-[5px] text-[9px] leading-3 text-black">
        <button type="button">Tệp hồ sơ</button>
        <button type="button">Chữ ký điện tử</button>
      </div>
      <div className="flex h-[15px] shrink-0 items-center gap-3 border-b border-[#b4b4b4] pl-[3px]">
        <button type="button" aria-label="Open">
          <svg width="12" height="10" viewBox="0 0 12 10">
            <path d="M.5 9.500v-8h4l1 1.500h5v6.500z" fill="#e7b53b" stroke="#a87a1c" />
            <path d="M1 9.500 3 4.500h8.500l-1.500 5z" fill="#ffe07a" stroke="#b98a22" strokeWidth=".7" />
          </svg>
        </button>
        <button type="button" aria-label="Print">
          <svg width="12" height="10" viewBox="0 0 12 10">
            <path d="M3 .5h6v4H3z" fill="#7fc1ea" />
            <path d="M.5 4h11v4H.5z" fill="#8d9bb0" />
            <path d="M2.500 7h7l1 2.500h-9z" fill="#4fb0e8" />
          </svg>
        </button>
        <button type="button" aria-label="Check signature">
          <svg width="12" height="11" viewBox="0 0 12 11">
            <rect x=".5" y=".5" width="10" height="10" fill="#f3cf87" stroke="#b98c3c" />
            <path d="M2.500 3h5M2.500 5h3" stroke="#a67a2b" />
            <path d="M4.500 6.500 7 9l4.500-5" fill="none" stroke="#3ea83a" strokeWidth="2" />
          </svg>
        </button>
      </div>
      <div className="flex min-h-0 flex-1 bg-[#555]">
        <div className="flex min-w-0 flex-1 justify-center">
          <div className="w-[685px] overflow-hidden bg-white px-[23px] pt-3 font-['Liberation_Serif',serif] text-black">
            <p className="mb-[13px] pl-[2px] text-[12px] font-bold leading-4">Tỷ giá quy đổi: 0</p>
            <div className="relative">
              <BalanceTable />
              <svg width="172" height="42" viewBox="0 0 172 42" className="absolute right-[146px] top-[44px]">
                <path d="M3 39 162 8" stroke="#000" strokeWidth="1.300" />
                <path d="M171 6 161 3.500 163 12z" />
              </svg>
            </div>
          </div>
        </div>
        <div className="flex w-[14px] flex-col items-center border-l border-[#dcdcdc] bg-[#efefef] text-[#555]">
          <Caret className="mt-[5px] rotate-180" />
          <div className="mt-[59px] flex h-[73px] w-[11px] items-center justify-center rounded-[2px] border border-[#a9a9a9] bg-linear-to-r from-[#f5f5f5] to-[#c9c9cf]">
            <svg width="5" height="6" viewBox="0 0 5 6" stroke="#777">
              <path d="M0 .5h5M0 2.500h5M0 4.500h5" />
            </svg>
          </div>
          <Caret className="mb-1 mt-auto" />
        </div>
      </div>
      <div className="flex h-[23px] shrink-0 items-center gap-1 border-t border-[#cfcfcf] bg-[#f1f1f1] pl-[3px] text-[9px] leading-3">
        <button type="button" className="border border-[#aaa] bg-white px-[3px] text-[#8a8a8a]">Tờ khai</button>
        <button type="button" className="border border-[#aaa] bg-white px-[2px] text-black">PL_KQHDSXKD</button>
        <button type="button" className="border border-[#aaa] bg-white px-[3px] text-black">PL_LCTTTT</button>
      </div>
      <div className="flex h-[25px] shrink-0 items-center border-t border-[#4a5c78] bg-[#001d4b] text-[9px] text-white">
        <StartOrb className="ml-[6px] h-6 w-[29px]" />
        <StartOrb green className="ml-[21px] h-5 w-[23px]" />
        <FirefoxIcon className="ml-[25px] h-5 w-[24px]" />
        <IEIcon className="ml-[23px] h-5 w-[25px]" />
        <div className="ml-[13px] flex h-6 gap-[2px]">
          <TaskButton small icon={<ChromeIcon className="h-5 w-[23px]" />}>sau khi nhập khẩ...</TaskButton>
          <TaskButton small icon={<MisaIcon className="h-5 w-[25px]" />}>MISA SME.NET 20...</TaskButton>
          <TaskButton small active icon={<SheetIcon className="h-5 w-[25px]" />}>iTax Viewer</TaskButton>
          <TaskButton small icon={<WordIcon className="h-5 w-[23px]" />}>KIEM TRA [Comp...</TaskButton>
        </div>
        <div className="ml-auto flex items-center">
          <TrayIcons small />
          <p className="ml-[14px] w-[49px] whitespace-nowrap text-center leading-[11px]">
            10:15 CH
            <br />
            24/03/2018
          </p>
          <span className="ml-[7px] h-6 w-[10px] border-l border-[#63738c] bg-linear-to-br from-[#5d6d88] to-[#001d4b]" />
        </div>
      </div>
      <div className="pointer-events-none absolute inset-0 border border-dashed border-[#5a8fd8]" />
      <Handle className="left-0 top-0" />
      <Handle className="left-[551px] top-0" />
      <Handle className="right-0 top-0" />
      <Handle className="left-0 top-[288px]" />
      <Handle className="right-0 top-[288px]" />
      <Handle className="bottom-0 left-0" />
      <Handle className="bottom-0 left-[551px]" />
      <Handle className="bottom-0 right-0" />
    </div>
  );
}

/* ---------- document area ---------- */

function DocScrollbar() {
  return (
    <div className="flex w-[17px] flex-col items-center border-l border-[#a8c4ec] bg-[#9fbee9]">
      <svg width="14" height="20" viewBox="0 0 14 20" className="shrink-0">
        <path d="M2 0h10" stroke="#3b4763" strokeWidth="2" />
        <path d="M1.500 5.500h4v2h3l3-1v8l-2 1-2-2h-5z" fill="#eef3fa" stroke="#4a5673" />
        <path d="M4 10h1M7 10h1M10 10h1M6 12v1" stroke="#4a5673" />
      </svg>
      <div className="flex w-[15px] flex-1 flex-col items-center bg-linear-to-r from-[#6a8ec2] to-[#87a3cb] text-[#3c4d7e]">
        <svg width="9" height="5" viewBox="0 0 9 5" className="mt-[5px] shrink-0">
          <path d="M0 5h9L4.500 0z" fill="currentColor" />
        </svg>
        <div className="mt-[339px] flex h-[202px] w-[14px] shrink-0 items-center justify-center rounded-[2px] border border-[#4f659d] bg-[linear-gradient(90deg,#f4f6f8_0%,#dfe5ee_45%,#b4c4da_55%,#d7e2ee_100%)]">
          <svg width="8" height="8" viewBox="0 0 8 8" stroke="#6c7688">
            <path d="M0 .5h8M0 2.500h8M0 4.500h8M0 6.500h8" />
          </svg>
        </div>
        <svg width="9" height="5" viewBox="0 0 9 5" className="mb-[6px] mt-auto shrink-0">
          <path d="M0 0h9L4.500 5z" fill="currentColor" />
        </svg>
      </div>
      <div className="flex h-[52px] shrink-0 flex-col items-center justify-around">
        <svg width="7" height="7" viewBox="0 0 7 7">
          <path d="M3.500 0 6 2.500H1zM3.500 3 6 5.500H1zM1 6h5v1H1z" />
        </svg>
        <svg width="8" height="8" viewBox="0 0 8 8">
          <circle cx="4" cy="4" r="3" fill="#c5c9d0" stroke="#222" />
        </svg>
        <svg width="7" height="7" viewBox="0 0 7 7">
          <path d="M3.500 7 6 4.500H1zM3.500 4 6 1.500H1zM1 0h5v1H1z" />
        </svg>
      </div>
    </div>
  );
}

function DocumentArea() {
  return (
    <main className="flex min-h-0 flex-1 overflow-hidden bg-[linear-gradient(180deg,#a3c1ea_0%,#6b8fc2_55%,#557db0_78%,#6690cf_100%)]">
      <article className="ml-[80px] mr-[76px] min-w-0 flex-1 border-x border-[#4c5d78] bg-white pl-[115px] pr-[43px] pt-[33px] shadow-[3px_0_8px_#2f4f80]">
        <ITaxPicture />
        <p className="mt-[18px] font-['Lato',sans-serif] text-[27px] font-normal leading-[44px] text-[#ff0000]">
          BCTC NĂM 2016
        </p>
      </article>
      <DocScrollbar />
    </main>
  );
}

/* ---------- status bar ---------- */

function StatusBar() {
  const sep = "border-r border-[#8fb0dc] shadow-[1px_0_0_#f2f7fd]";
  return (
    <footer className="flex h-[23px] shrink-0 items-stretch border-t border-[#567db1] bg-[linear-gradient(180deg,#e3eefc_0%,#c4dbf8_30%,#adcaf2_35%,#c5dbf6_100%)] text-[11px] leading-[21px] text-[#15306b]">
      <span className={clsx("pl-2 pr-[9px]", sep)}>Page: 2 of 2</span>
      <span className={clsx("px-[9px]", sep)}>Words: 6</span>
      <div className={clsx("flex gap-4 px-2", sep)}>
        <svg width="17" height="16" viewBox="0 0 17 16" className="self-center">
          <path d="M1 8l4-2 4 3 4-2 3 3-7 5L1 11z" fill="#f5f8fc" stroke="#5b75a8" />
          <path d="M6 5l3 4 7-8" fill="none" stroke="#3569bc" strokeWidth="2" />
        </svg>
        <span>English (United States)</span>
      </div>
      <div className="ml-auto flex items-center border-l border-[#7fa1d1] bg-[linear-gradient(180deg,#bdd3f1_0%,#8fb3e3_35%,#7aa2d8_40%,#9fc0ea_100%)] pl-1">
        <div className="flex h-[18px] rounded-[2px] border border-[#6f93c6] bg-[#aecbee]">
          {["Print Layout", "Full Screen Reading", "Web Layout", "Outline", "Draft"].map((v, i) => (
            <button
              key={v}
              type="button"
              aria-label={v}
              className={clsx(
                "flex w-[18px] items-center justify-center border-r border-[#8fb0dc] last:border-r-0",
                i === 0 && "bg-linear-to-b from-[#fff3c4] to-[#fbc45e]"
              )}
            >
              <svg width="12" height="12" viewBox="0 0 12 12" fill="none" stroke="#5f6572">
                {i === 0 && <path d="M1 .5h10v11H1zM3 3h6M3 5h6M3 7h6M3 9h6" fill="#fff" />}
                {i === 1 && <path d="M.5 1.500 6 2.500l5.500-1v8L6 11 .5 9.500zM6 2.500V11M2 4h2.500M2 6h2.500M2 8h2.500M7.500 4H10M7.500 6H10M7.500 8H10" fill="#fff" />}
                {i === 2 && (
                  <>
                    <path d="M.5.5h9v9h-9zM2 3h6M2 5h6M2 7h3" fill="#fff" />
                    <circle cx="8.500" cy="8.500" r="3" fill="#3d8fb8" stroke="#2f6f58" />
                  </>
                )}
                {i === 3 && <path d="M1 1.500h5M4 4h7M4 6.500h5M6 9h5M4 11.500h7" />}
                {i === 4 && <path d="M1 1.500h10M1 4h10M1 6.500h10M1 9h10M1 11.500h10" />}
              </svg>
            </button>
          ))}
        </div>
        <button type="button" className="w-[44px] self-start pl-2 text-left">120%</button>
        <button type="button" aria-label="Zoom out">
          <svg width="16" height="16" viewBox="0 0 16 16">
            <circle cx="8" cy="8" r="7" fill="#e7eef8" stroke="#5a7098" />
            <path d="M4.500 8h7" stroke="#4a5a78" strokeWidth="2.400" />
          </svg>
        </button>
        <input
          type="range"
          aria-label="Zoom"
          defaultValue="52"
          className="mx-px h-[15px] w-[100px] appearance-none bg-[linear-gradient(180deg,transparent_7px,#4f74a8_7px,#4f74a8_8px,#d9e7f8_8px,#d9e7f8_9px,transparent_9px)] [&::-webkit-slider-thumb]:h-3 [&::-webkit-slider-thumb]:w-[9px] [&::-webkit-slider-thumb]:appearance-none [&::-webkit-slider-thumb]:rounded-b-[4px] [&::-webkit-slider-thumb]:border [&::-webkit-slider-thumb]:border-[#4f658f] [&::-webkit-slider-thumb]:bg-[#e4ecf7]"
        />
        <button type="button" aria-label="Zoom in" className="mr-[5px]">
          <svg width="16" height="16" viewBox="0 0 16 16">
            <circle cx="8" cy="8" r="7" fill="#e7eef8" stroke="#5a7098" />
            <path d="M4 8h8M8 4v8" stroke="#4a5a78" strokeWidth="2.200" />
          </svg>
        </button>
      </div>
    </footer>
  );
}

/* ---------- taskbar ---------- */

function TaskButton({ icon, active, small, children }) {
  return (
    <button
      type="button"
      className={clsx(
        "flex items-center overflow-hidden whitespace-nowrap rounded-[2px] border text-left text-white",
        small ? "h-6 w-[122px] gap-1 pl-[6px] text-[9px]" : "h-[38px] w-[158px] gap-1 pl-[9px] text-[12px]",
        active
          ? "border-[#c5ccd8] bg-[linear-gradient(170deg,#b4bdcb_0%,#8995ab_35%,#5f6f8d_55%,#74829c_100%)]"
          : "border-[#64748f] bg-[linear-gradient(170deg,#75839b_0%,#43557a_30%,#1a3158_50%,#17315c_100%)]"
      )}
    >
      {icon}
      <span>{children}</span>
    </button>
  );
}

function TrayIcons({ small }) {
  return (
    <div className={clsx("flex items-center", small ? "gap-2" : "gap-3")}>
      <svg width="7" height="4" viewBox="0 0 7 4">
        <path d="M0 4h7L3.500 0z" fill="#fff" />
      </svg>
      <svg viewBox="0 0 15 15" className={small ? "h-[11px] w-3" : "h-[15px] w-[15px]"}>
        <path d="M1.500 12V3L3 1h5l1.500 1.500" stroke="#fff" strokeWidth="1.400" fill="#1c1c1c" />
        <path d="M8.500 1.500v4M12.500 1.500v4" stroke="#fff" strokeWidth="1.300" />
        <path d="M6.500 5h8v2.500l-2 2.500h-1.500v3H7" fill="#fff" stroke="#fff" strokeWidth=".8" />
        <path d="M1 7.500 8 14M8 7.500 1 14" stroke="#e81010" strokeWidth="2.600" />
      </svg>
      <svg viewBox="0 0 12 13" className={small ? "h-[10px] w-[11px]" : "h-[13px] w-3"}>
        <path d="M0 4h3l4-4v13L3 9H0z" fill="#fff" />
        <path d="M9 4c1.500 1.500 1.500 3.500 0 5" stroke="#fff" fill="none" />
      </svg>
    </div>
  );
}

function Taskbar() {
  return (
    <div className="flex h-[39px] shrink-0 items-center border-t border-[#2c4468] bg-[#001f4d] text-[12px] text-white">
      <button type="button" aria-label="Start" className="ml-2">
        <StartOrb className="h-[37px] w-[38px]" />
      </button>
      <button type="button" aria-label="Windows Media Center" className="ml-[27px]">
        <StartOrb green className="h-[30px] w-[30px]" />
      </button>
      <button type="button" aria-label="Firefox" className="ml-8">
        <FirefoxIcon className="h-[31px] w-[31px]" />
      </button>
      <button type="button" aria-label="Internet Explorer" className="ml-[30px]">
        <IEIcon className="h-[33px] w-[34px]" />
      </button>
      <div className="ml-4 flex gap-1">
        <TaskButton icon={<ChromeIcon className="h-[31px] w-[31px]" />}>Trả lời bài Số liệu ...</TaskButton>
        <TaskButton icon={<MisaIcon className="h-8 w-8" />}>MISA SME.NET 20...</TaskButton>
        <TaskButton icon={<SheetIcon className="h-[31px] w-8" />}>iTax Viewer</TaskButton>
        <TaskButton active icon={<WordIcon className="h-[30px] w-[31px]" />}>KIEM TRA [Comp...</TaskButton>
      </div>
      <div className="ml-auto flex items-center">
        <TrayIcons />
        <p className="ml-[18px] w-[62px] whitespace-nowrap text-center leading-[17px]">
          10:21 CH
          <br />
          24/03/2018
        </p>
        <button type="button" aria-label="Show desktop" className="ml-[9px] h-[37px] w-[14px] border border-[#56667f] bg-linear-to-br from-[#5d6d88] via-[#0d2850] to-[#001f4d]" />
      </div>
    </div>
  );
}

export default function App() {
  return (
    <div className={clsx("relative flex h-screen flex-col overflow-hidden", UI)}>
      <Gradients />
      <OfficeButton />
      <TitleBar />
      <TabRow />
      <Ribbon />
      <DocumentArea />
      <StatusBar />
      <Taskbar />
    </div>
  );
}
